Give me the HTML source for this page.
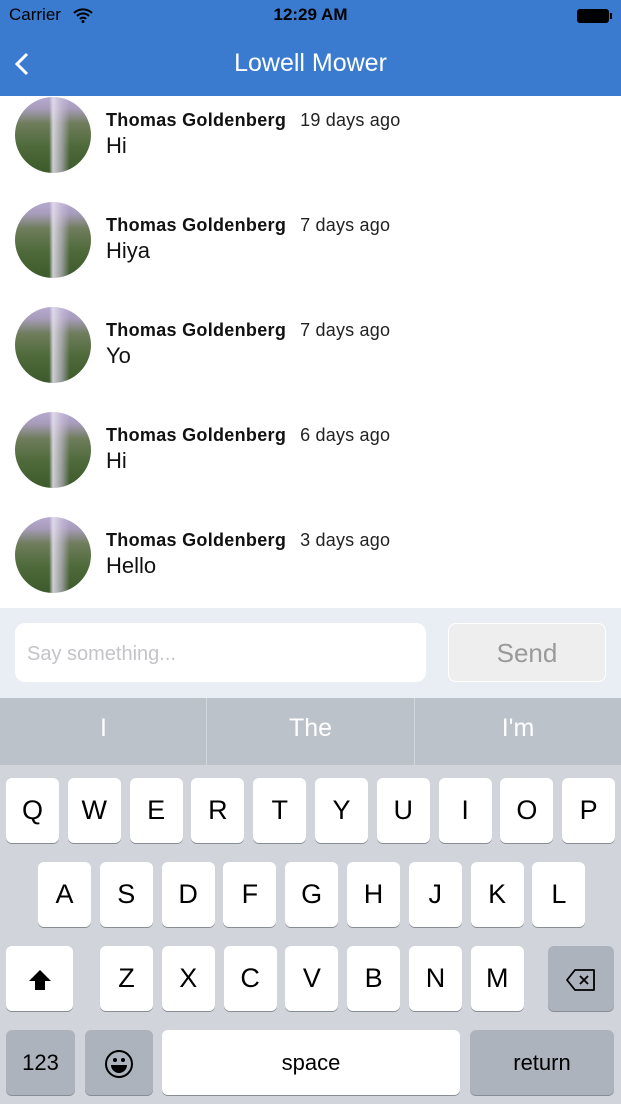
<!DOCTYPE html>
<html><head><meta charset="utf-8"><style>
*{margin:0;padding:0;box-sizing:border-box}
body{width:621px;height:1104px;position:relative;overflow:hidden;font-family:"Liberation Sans",sans-serif;background:#fff}
.abs{position:absolute}
.hdr{left:0;top:0;width:621px;height:96px;background:#3a7bd0}
.av{width:76px;height:76px;border-radius:50%;left:15px;background:linear-gradient(90deg,transparent 0 45%,rgba(230,225,240,.85) 50%,rgba(200,190,215,.6) 62%,transparent 72%),linear-gradient(180deg,#b6a9cf 0%,#a89cbc 15%,#6f7d5c 35%,#4e6a3a 65%,#3d5a2c 100%)}
.nm{left:106px;font-weight:bold;font-size:18px;letter-spacing:0.3px;color:#111}
.tm{font-weight:normal;margin-left:14px;letter-spacing:0.2px;color:#222}
.msg{left:106px;font-size:22px;color:#111}
.key{background:#fff;border-radius:6px;box-shadow:0 1px 0 #888d94;font-size:27px;text-align:center;color:#000}
.dk{background:#adb3bc}
</style></head><body>
<div class="abs hdr"></div>
<div class="abs" style="left:9px;top:5px;font-size:17px;color:#000">Carrier</div>
<svg class="abs" style="left:73px;top:7px" width="20" height="16" viewBox="0 0 20 16"><path d="M1 6a13 13 0 0 1 18 0M4 9a8.5 8.5 0 0 1 12 0M7 12a4 4 0 0 1 6 0" stroke="#000" stroke-width="2" fill="none"/><circle cx="10" cy="14.5" r="1.5"/></svg>
<div class="abs" style="left:0;width:621px;top:5px;text-align:center;font-size:17px;font-weight:bold">12:29 AM</div>
<div class="abs" style="left:577px;top:9px;width:32px;height:14px;background:#000;border-radius:3px"></div>
<div class="abs" style="left:610px;top:13px;width:2px;height:6px;background:#000"></div>
<svg class="abs" style="left:13px;top:52px" width="18" height="24"><path d="M14 2L4 12l10 10" stroke="#fff" stroke-width="3" fill="none"/></svg>
<div class="abs" style="left:0;width:621px;top:49px;text-align:center;font-size:25px;color:#fff">Lowell Mower</div>

<div class="abs av" style="top:97px"></div><div class="abs nm" style="top:110px">Thomas Goldenberg<span class="tm">19 days ago</span></div><div class="abs msg" style="top:133px">Hi</div>
<div class="abs av" style="top:202px"></div><div class="abs nm" style="top:215px">Thomas Goldenberg<span class="tm">7 days ago</span></div><div class="abs msg" style="top:238px">Hiya</div>
<div class="abs av" style="top:307px"></div><div class="abs nm" style="top:320px">Thomas Goldenberg<span class="tm">7 days ago</span></div><div class="abs msg" style="top:343px">Yo</div>
<div class="abs av" style="top:412px"></div><div class="abs nm" style="top:425px">Thomas Goldenberg<span class="tm">6 days ago</span></div><div class="abs msg" style="top:448px">Hi</div>
<div class="abs av" style="top:517px"></div><div class="abs nm" style="top:530px">Thomas Goldenberg<span class="tm">3 days ago</span></div><div class="abs msg" style="top:553px">Hello</div>

<div class="abs" style="left:0;top:608px;width:621px;height:90px;background:#e9edf4"></div>
<div class="abs" style="left:15px;top:623px;width:411px;height:59px;background:#fff;border-radius:10px;font-size:20px;color:#c4c4c8;padding:20px 0 0 12px">Say something...</div>
<div class="abs" style="left:448px;top:623px;width:158px;height:59px;background:#eee;border:1px solid #fff;border-radius:8px;font-size:26px;color:#999;text-align:center;line-height:59px">Send</div>

<div class="abs" style="left:0;top:698px;width:621px;height:67px;background:#bcc2ca"></div>
<div class="abs" style="left:206px;top:698px;width:1px;height:67px;background:#d3d7dc"></div>
<div class="abs" style="left:414px;top:698px;width:1px;height:67px;background:#d3d7dc"></div>
<div class="abs" style="left:0;width:207px;top:714px;text-align:center;font-size:25px;color:#fff">I</div>
<div class="abs" style="left:207px;width:207px;top:714px;text-align:center;font-size:25px;color:#fff">The</div>
<div class="abs" style="left:415px;width:206px;top:714px;text-align:center;font-size:25px;color:#fff">I'm</div>
<div class="abs" style="left:0;top:765px;width:621px;height:339px;background:#d1d5db"></div>
<div id="kb"></div>
<script>
var h='';function k(x,y,w,t,c,fs){h+='<div class="abs key '+(c||'')+'" style="left:'+x+'px;top:'+y+'px;width:'+w+'px;height:65px;line-height:65px;'+(fs?'font-size:'+fs+'px':'')+'">'+t+'</div>';}
'QWERTYUIOP'.split('').forEach(function(c,i){k(6+61.8*i,778,53,c)});
'ASDFGHJKL'.split('').forEach(function(c,i){k(38+61.8*i,862,53,c)});
'ZXCVBNM'.split('').forEach(function(c,i){k(100+61.8*i,946,53,c)});
k(6,946,67,'<svg width="24" height="22" viewBox="0 0 24 22" style="vertical-align:middle"><path d="M12 1L1 12h6v9h10v-9h6z"/></svg>');
k(548,946,66,'<svg width="32" height="24" viewBox="0 0 32 24" style="vertical-align:middle"><path d="M10 2h19v20H10L2 12z" fill="none" stroke="#000" stroke-width="1.8" stroke-linejoin="round"/><path d="M15 8l8 8M23 8l-8 8" stroke="#000" stroke-width="1.8"/></svg>','dk');
k(6,1030,69,'123','dk',22);
k(85,1030,68,'<svg width="30" height="30" viewBox="0 0 30 30" style="vertical-align:middle"><circle cx="15" cy="15" r="13" fill="none" stroke="#000" stroke-width="2"/><circle cx="11" cy="11" r="2"/><circle cx="19" cy="11" r="2"/><path d="M7 16h16a8 8 0 0 1-16 0z"/></svg>','dk');
k(162,1030,298,'space','',22);
k(470,1030,144,'return','dk',22);
document.getElementById('kb').innerHTML=h;
</script>
</body></html>
